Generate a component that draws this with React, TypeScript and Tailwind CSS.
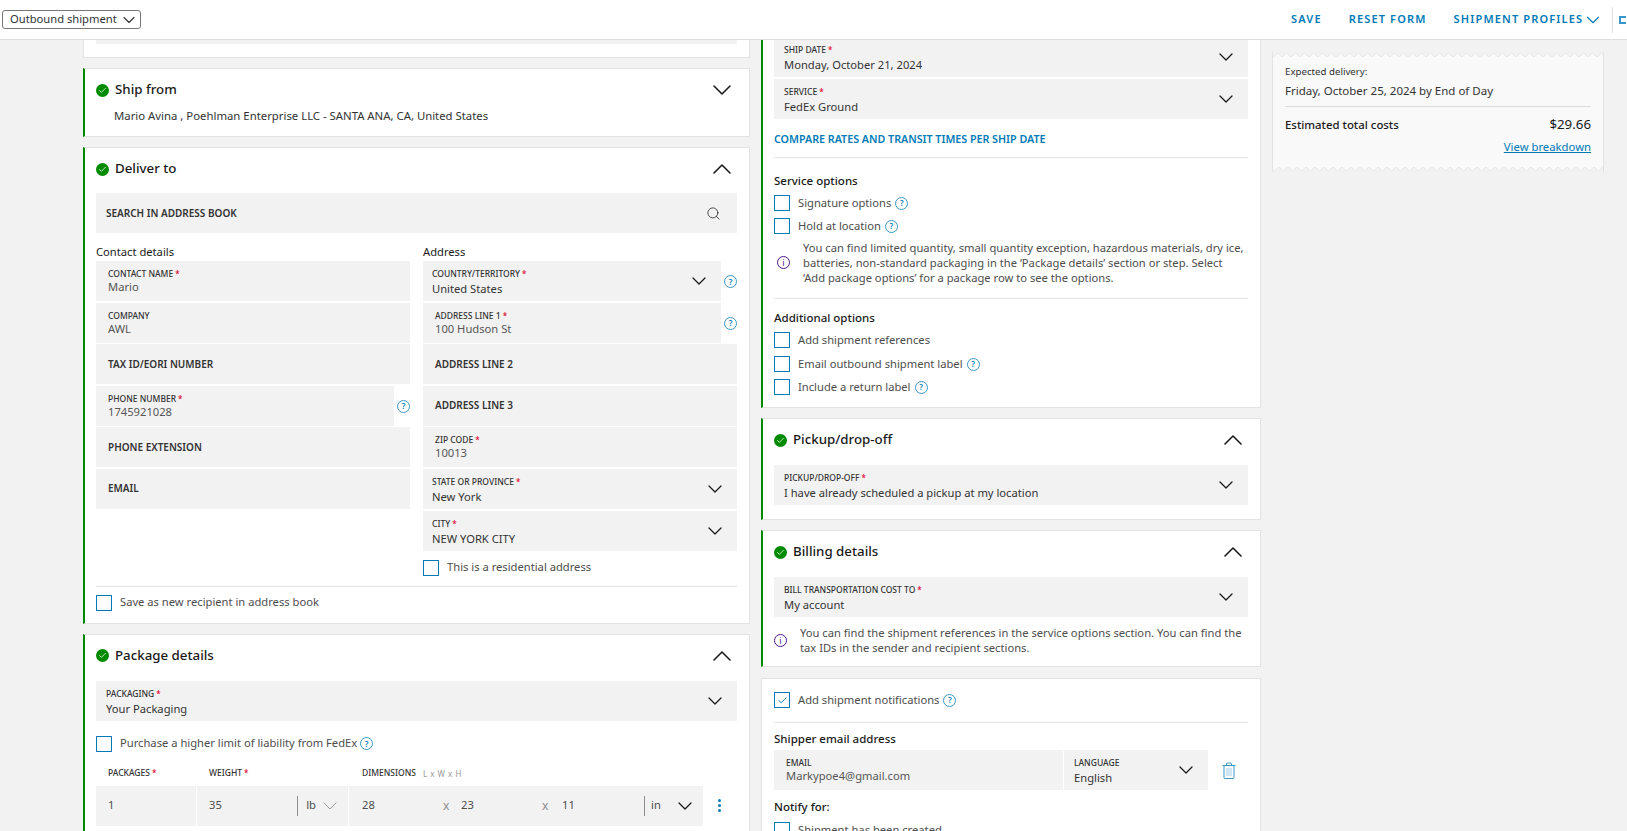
import { ReactNode } from "react"
import { ChevronDown, ChevronUp, Search, Check } from "lucide-react"

function CheckBadge() {
  return (
    <span className="flex h-[13px] w-[13px] shrink-0 items-center justify-center rounded-full bg-[#008a00] text-white">
      <Check size={9} strokeWidth={2} />
    </span>
  )
}

function HelpIcon() {
  return (
    <span className="flex h-[13px] w-[13px] shrink-0 items-center justify-center rounded-full border border-[#3a97c9] text-[8px] font-semibold leading-none text-[#007ab7]">
      ?
    </span>
  )
}

function InfoIcon() {
  return (
    <span className="flex h-[13px] w-[13px] shrink-0 items-center justify-center rounded-full border border-[#4d148c] text-[9px] leading-none text-[#4d148c]">
      i
    </span>
  )
}

function TrashIcon() {
  return (
    <svg width="14" height="17" viewBox="0 0 14 17" fill="none" stroke="#3a97c9" strokeWidth="1" className="ml-[14px]">
      <path d="M0.5 3.5h13M2 3.5v12a1 1 0 0 0 1 1h8a1 1 0 0 0 1-1v-12M4.5 3.5v-1.5a1 1 0 0 1 1-1h3a1 1 0 0 1 1 1v1.5" />
      <path d="M5 6v8M7 6v8M9 6v8" stroke="#9ccbe4" />
    </svg>
  )
}

function Box({ checked }: { checked?: boolean }) {
  return (
    <span className="flex h-4 w-4 shrink-0 items-center justify-center border border-[#007ab7] bg-white text-[#007ab7]">
      {checked && <Check size={11} strokeWidth={2} />}
    </span>
  )
}

function Option({ label, help, className }: { label: string; help?: boolean; className?: string }) {
  return (
    <div className={`flex h-4 items-center ${className ?? ""}`}>
      <Box />
      <span className="ml-2 text-[#4d4d4d]">{label}</span>
      {help && <span className="ml-1"><HelpIcon /></span>}
    </div>
  )
}

function Req() {
  return <span className="ml-[2px] text-[8px] text-[#de002e]">*</span>
}

// grey input with small label on top, or a big label when there is no value
function Field({ label, value, required, select, pad = "px-3" }: {
  label: string
  value?: string
  required?: boolean
  select?: boolean
  pad?: string
}) {
  return (
    <div className={`relative h-10 w-full min-w-0 bg-[#f2f2f2] ${pad}`}>
      {value ? (
        <div className="pt-[6px]">
          <div className="text-[8.5px] font-medium uppercase leading-[14px] text-[#333333]">
            {label}
            {required && <Req />}
          </div>
          <div className={`leading-[18px] ${select ? "-mt-px text-[#333333]" : "-mt-[3px] text-[#565656]"}`}>{value}</div>
        </div>
      ) : (
        <div className="flex h-full items-center text-[10px] font-semibold uppercase text-[#333333]">{label}</div>
      )}
      {select && (
        <ChevronDown size={24} strokeWidth={1.3} className="absolute right-[10px] top-[8px] text-[#1a1a1a]" />
      )}
    </div>
  )
}

function Card({ title, open, accent = true, children, className }: {
  title?: string
  open?: boolean
  accent?: boolean
  children?: ReactNode
  className?: string
}) {
  return (
    <section className={`border border-[#e3e3e3] bg-white ${accent ? "border-l-2 border-l-[#008a00]" : ""} ${className ?? ""}`}>
      {title && (
        <div className="flex h-[46px] items-center pb-[4px] pl-[11px] pr-[11px]">
          <CheckBadge />
          <h2 className="ml-[6px] flex-1 text-[13.3px] font-medium text-[#1a1a1a]">{title}</h2>
          {open ? <ChevronUp size={32} strokeWidth={1.2} /> : <ChevronDown size={32} strokeWidth={1.2} />}
        </div>
      )}
      {children}
    </section>
  )
}

function HelpSlot({ children }: { children: ReactNode }) {
  return (
    <div className="flex gap-px">
      {children}
      <div className="flex w-[15px] shrink-0 justify-end pt-[14px]"><HelpIcon /></div>
    </div>
  )
}

function Zigzag({ id, className }: { id: string; className: string }) {
  return (
    <svg className={`absolute left-0 h-[5px] w-full ${className}`}>
      <defs>
        <pattern id={id} width="9" height="5" patternUnits="userSpaceOnUse">
          <path d="M0 5L4.5 1L9 5V0H0Z" fill="#f2f2f2" stroke="none" />
          <path d="M0 5L4.5 1L9 5" fill="none" stroke="#e6e6e6" strokeWidth="1" />
        </pattern>
      </defs>
      <rect width="100%" height="5" fill={`url(#${id})`} />
    </svg>
  )
}

export default function App() {
  return (
    <div className="h-[831px] w-[1627px] overflow-hidden bg-[#f2f2f2] font-['Noto_Sans',sans-serif] text-[11.2px] text-[#1a1a1a]">
      <header className="flex h-[40px] items-center overflow-hidden border-b border-[#dddddd] bg-white pl-[2px]">
        <button className="flex h-[19px] w-[139px] items-center justify-between rounded-[3px] border border-[#767676] pl-[7px] pr-[1px] text-[11.2px] text-[#333333]">
          Outbound shipment
          <ChevronDown size={20} strokeWidth={1.3} />
        </button>
        <nav className="ml-auto flex w-[336px] shrink-0 items-center text-[11px] font-semibold tracking-[1.15px] text-[#007ab7]">
          <span>SAVE</span>
          <span className="ml-[27px]">RESET FORM</span>
          <span className="ml-[27px]">SHIPMENT PROFILES</span>
          <ChevronDown size={22} strokeWidth={1.2} className="-ml-px" />
          <span className="ml-[8px] h-[26px] w-px bg-[#dddddd]" />
          <span className="ml-[6px] h-[8px] w-[7px] shrink-0 border-y-2 border-l-2 border-[#3a97c9]" />
        </nav>
      </header>

      <main className="flex items-start pl-[83px]">
        {/* left column */}
        <div className="flex w-[667px] shrink-0 flex-col gap-[10px]">
          <div className="h-[18px] border border-t-0 border-[#e3e3e3] bg-white pl-3 pr-3">
            <div className="h-[4px] bg-[#f2f2f2]" />
          </div>

          <Card title="Ship from" className="h-[69px]">
            <p className="-mt-[7px] ml-[29px] text-[11.35px] leading-[16px] text-[#333333]">Mario Avina , Poehlman Enterprise LLC - SANTA ANA, CA, United States</p>
          </Card>

          <Card title="Deliver to" open>
            <div className="-mt-px pb-3 pl-[11px] pr-3">
              <div className="flex h-10 items-center justify-between bg-[#f2f2f2] pl-[10px] pr-4">
                <span className="text-[10px] font-semibold text-[#333333]">SEARCH IN ADDRESS BOOK</span>
                <Search size={15} strokeWidth={1.2} />
              </div>
              <div className="mt-[10px] grid grid-cols-2 gap-x-[13px]">
                <div>
                  <h3 className="mb-px font-normal leading-[17px]">Contact details</h3>
                  <div className="flex flex-col gap-[1.6px]">
                    <Field label="Contact name" value="Mario" required />
                    <Field label="Company" value="AWL" />
                    <Field label="Tax ID/EORI number" />
                    <HelpSlot><Field label="Phone number" value="1745921028" required /></HelpSlot>
                    <Field label="Phone extension" />
                    <Field label="Email" />
                  </div>
                </div>
                <div>
                  <h3 className="mb-px font-normal leading-[17px]">Address</h3>
                  <div className="flex flex-col gap-[1.6px]">
                    <HelpSlot><Field label="Country/Territory" value="United States" required select pad="px-[9px]" /></HelpSlot>
                    <HelpSlot><Field label="Address line 1" value="100 Hudson St" required /></HelpSlot>
                    <Field label="Address line 2" />
                    <Field label="Address line 3" />
                    <Field label="ZIP code" value="10013" required />
                    <Field label="State or province" value="New York" required select pad="px-[9px]" />
                    <Field label="City" value="NEW YORK CITY" required select pad="px-[9px]" />
                  </div>
                  <Option label="This is a residential address" className="mt-[9px]" />
                </div>
              </div>
              <div className="mt-[10px] border-t border-[#e3e3e3] pt-2">
                <Option label="Save as new recipient in address book" />
              </div>
            </div>
          </Card>

          <Card title="Package details" open className="h-[260px]">
            <div className="pl-[11px] pr-3">
              <Field label="Packaging" value="Your Packaging" required select pad="px-[10px]" />
              <div className="mt-[15px] flex h-4 items-center">
                <Box />
                <span className="ml-2 text-[#4d4d4d]">Purchase a higher limit of liability from FedEx</span>
                <span className="ml-[3px]"><HelpIcon /></span>
              </div>
              <div className="mt-[15px] flex h-[14px] items-center text-[8.5px] font-medium text-[#333333]">
                <span className="ml-3 w-[101px]">PACKAGES<Req /></span>
                <span className="w-[153px]">WEIGHT<Req /></span>
                <span>DIMENSIONS</span>
                <span className="ml-[7px] text-[8px] font-normal tracking-[0.5px] text-[#9a9a9a]">L x W x H</span>
              </div>
              <div className="mt-[5px] flex items-center">
                <div className="flex h-10 w-[607px] gap-px text-[#4d4d4d]">
                  <div className="flex w-[100px] items-center bg-[#f2f2f2] pl-3">1</div>
                  <div className="flex w-[151px] items-center bg-[#f2f2f2] pl-3">
                    <span className="flex-1">35</span>
                    <span className="h-5 w-px bg-[#8e8e8e]" />
                    <span className="ml-2">lb</span>
                    <ChevronDown size={24} strokeWidth={0.9} className="ml-[2px] mr-[6px] text-[#8e8e8e]" />
                  </div>
                  <div className="flex flex-1 items-center bg-[#f2f2f2] pl-[13px]">
                    <span className="w-[81px]">28</span>
                    <span className="w-[18px] text-[12px] text-[#8e8e8e]">x</span>
                    <span className="w-[81px]">23</span>
                    <span className="w-[20px] text-[12px] text-[#8e8e8e]">x</span>
                    <span className="w-[82px]">11</span>
                    <span className="h-5 w-px bg-[#8e8e8e]" />
                    <span className="ml-[6px]">in</span>
                    <ChevronDown size={24} strokeWidth={1.3} className="ml-[12px] text-[#1a1a1a]" />
                  </div>
                </div>
                <div className="ml-[15px] flex flex-col gap-[2px]">
                  <span className="h-[3px] w-[3px] rounded-full bg-[#007ab7]" />
                  <span className="h-[3px] w-[3px] rounded-full bg-[#007ab7]" />
                  <span className="h-[3px] w-[3px] rounded-full bg-[#007ab7]" />
                </div>
              </div>
            </div>
          </Card>
        </div>

        {/* middle column */}
        <div className="ml-[11px] flex w-[500px] shrink-0 flex-col gap-[10px]">
          <Card className="border-t-0">
            <div className="pb-3 pl-[11px] pr-3">
              <div className="flex flex-col gap-[2px]">
                <div className="h-[37px] overflow-hidden">
                  <div className="-mt-[3px]"><Field label="Ship date" value="Monday, October 21, 2024" required select pad="px-[10px]" /></div>
                </div>
                <Field label="Service" value="FedEx Ground" required select pad="px-[10px]" />
              </div>
              <a className="mt-[13px] block text-[10.7px] font-semibold leading-[14px] text-[#007ab7]">
                COMPARE RATES AND TRANSIT TIMES PER SHIP DATE
              </a>
              <div className="mt-[11px] border-t border-[#e3e3e3]" />
              <h3 className="mt-[15px] text-[11.5px] font-medium leading-[16px]">Service options</h3>
              <Option label="Signature options" help className="mt-[6px]" />
              <Option label="Hold at location" help className="mt-[7px]" />
              <div className="mt-[6px] flex items-center">
                <span className="ml-[3px] mr-[13px]"><InfoIcon /></span>
                <p className="whitespace-nowrap leading-[15px] text-[#4d4d4d]">
                  You can find limited quantity, small quantity exception, hazardous materials, dry ice,<br />
                  batteries, non-standard packaging in the ‘Package details’ section or step. Select<br />
                  ‘Add package options’ for a package row to see the options.
                </p>
              </div>
              <div className="mt-[13px] border-t border-[#e3e3e3]" />
              <h3 className="mt-[11px] text-[11.5px] font-medium leading-[16px]">Additional options</h3>
              <Option label="Add shipment references" className="mt-[6px]" />
              <Option label="Email outbound shipment label" help className="mt-2" />
              <Option label="Include a return label" help className="mt-[7px]" />
            </div>
          </Card>

          <Card title="Pickup/drop-off" open>
            <div className="pb-[14px] pl-[11px] pr-3">
              <Field label="Pickup/drop-off" value="I have already scheduled a pickup at my location" required select pad="px-[10px]" />
            </div>
          </Card>

          <Card title="Billing details" open>
            <div className="pb-[11px] pl-[11px] pr-3">
              <Field label="Bill transportation cost to" value="My account" required select pad="px-[10px]" />
              <div className="mt-2 flex items-center">
                <span className="mr-[13px]"><InfoIcon /></span>
                <p className="whitespace-nowrap leading-[15px] text-[#4d4d4d]">
                  You can find the shipment references in the service options section. You can find the<br />
                  tax IDs in the sender and recipient sections.
                </p>
              </div>
            </div>
          </Card>

          <Card accent={false} className="mt-px h-[200px]">
            <div className="px-3 pt-[13px]">
              <div className="flex h-4 items-center">
                <Box checked />
                <span className="ml-2 text-[#4d4d4d]">Add shipment notifications</span>
                <span className="ml-1"><HelpIcon /></span>
              </div>
              <div className="mt-[14px] border-t border-[#e3e3e3]" />
              <h3 className="mt-[8px] text-[11.5px] font-medium leading-[16px]">Shipper email address</h3>
              <div className="mt-[3px] flex items-center">
                <div className="flex w-[434px] gap-px">
                  <div className="w-[289px] shrink-0"><Field label="Email" value="Markypoe4@gmail.com" /></div>
                  <div className="flex-1"><Field label="Language" value="English" select pad="px-[10px]" /></div>
                </div>
                <TrashIcon />
              </div>
              <h3 className="mt-[9px] text-[11.5px] font-medium leading-[16px]">Notify for:</h3>
              <Option label="Shipment has been created" className="mt-[7px]" />
            </div>
          </Card>
        </div>

        {/* summary */}
        <aside className="relative ml-[11px] mt-3 h-[120px] w-[332px] shrink-0 border-x border-[#e3e3e3] bg-[#f9f9f9] px-3 pt-[13px]">
          <Zigzag id="zig-top" className="top-0" />
          <Zigzag id="zig-bottom" className="bottom-0 rotate-180" />
          <p className="text-[9.7px] leading-[14px] text-[#333333]">Expected delivery:</p>
          <p className="mt-[3px] text-[11.5px] leading-[18px] text-[#333333]">Friday, October 25, 2024 by End of Day</p>
          <div className="mt-[6px] border-t border-[#dddddd]" />
          <div className="mt-[8px] flex items-center justify-between">
            <span className="text-[11.4px] font-medium">Estimated total costs</span>
            <span className="text-[13.3px]">$29.66</span>
          </div>
          <div className="mt-[4px] text-right">
            <a className="text-[11.3px] text-[#007ab7] underline">View breakdown</a>
          </div>
        </aside>
      </main>
    </div>
  )
}
